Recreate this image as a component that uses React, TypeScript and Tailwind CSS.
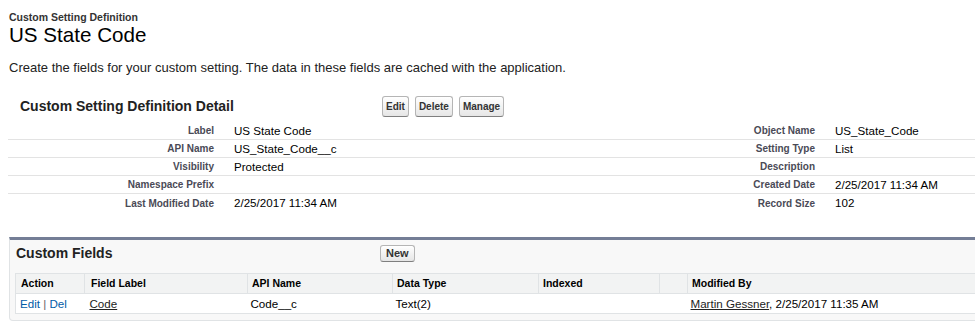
import React from "react";

const details: [string, string, string, string][] = [
  ["Label", "US State Code", "Object Name", "US_State_Code"],
  ["API Name", "US_State_Code__c", "Setting Type", "List"],
  ["Visibility", "Protected", "Description", ""],
  ["Namespace Prefix", "", "Created Date", "2/25/2017 11:34 AM"],
  ["Last Modified Date", "2/25/2017 11:34 AM", "Record Size", "102"],
];

const columns = [
  { name: "Action", w: "w-[69px]" },
  { name: "Field Label", w: "w-[163px]" },
  { name: "API Name", w: "w-[145px]" },
  { name: "Data Type", w: "w-[146px]" },
  { name: "Indexed", w: "w-[121px]" },
  { name: "", w: "w-[28px]" },
  { name: "Modified By", w: "w-auto" },
];

function Btn({ children }: { children: React.ReactNode }) {
  return (
    <button className="h-[21px] px-[3px] rounded-[3px] border border-[#b5b5b5] border-b-[#7f7f7f] bg-gradient-to-b from-white to-[#e6e6e6] text-[10px] font-bold text-[#333] leading-none">
      {children}
    </button>
  );
}

export default function App() {
  return (
    <div className="w-[975px] h-[335px] overflow-hidden bg-white text-black font-['Liberation_Sans',Arial,sans-serif]">
      <div className="pl-[9px] pt-[11px]">
        <div className="text-[10.5px] leading-[12px] font-bold text-[#333]">Custom Setting Definition</div>
        <h1 className="text-[20.6px] leading-[24px] text-black">US State Code</h1>
      </div>
      <p className="pl-[9px] mt-[14px] text-[13px] leading-[14px] text-[#222]">
        Create the fields for your custom setting. The data in these fields are cached with the application.
      </p>

      {/* detail block */}
      <div className="mt-[20px] ml-[8px]">
        <div className="flex items-center h-[23px]">
          <h2 className="w-[374px] pl-[12px] text-[14px] font-bold text-[#222]">Custom Setting Definition Detail</h2>
          <div className="flex gap-[6px]">
            <Btn>Edit</Btn>
            <Btn>Delete</Btn>
            <Btn>Manage</Btn>
          </div>
        </div>
        <div className="mt-[4px]">
          {details.map(([l1, v1, l2, v2], i) => (
            <div
              key={l1}
              className={`grid grid-cols-[216px_400px_201px_1fr] h-[18px] items-center ${
                i < details.length - 1 ? "border-b border-[#e3e3e3]" : ""
              }`}
            >
              <div className="text-right pr-[10px] text-[10px] font-bold text-[#4a4a56]">{l1}</div>
              <div className="pl-[10px] text-[11.6px] text-black">{v1}</div>
              <div className="text-right pr-[10px] text-[10px] font-bold text-[#4a4a56]">{l2}</div>
              <div className="pl-[10px] text-[11.6px] text-black">{v2}</div>
            </div>
          ))}
        </div>
      </div>

      {/* related list */}
      <div className="mt-[25px] ml-[9px] w-[990px] border-t-[3px] border-t-[#747e96] border-x border-b border-[#e0e3e5] rounded-b-[4px] bg-[#f8f8f8] pb-[6px]">
        <div className="flex items-center h-[26px]">
          <h3 className="w-[370px] pl-[6px] text-[14px] font-bold text-[#222]">Custom Fields</h3>
          <button className="h-[17px] px-[5px] rounded-[3px] border border-[#b5b5b5] border-b-[#7f7f7f] bg-gradient-to-b from-white to-[#e6e6e6] text-[11px] font-bold text-[#333] leading-none">
            New
          </button>
        </div>
        <table className="mt-[7px] ml-[5px] w-[980px] table-fixed border-collapse border border-[#e0e3e5]">
          <colgroup>
            {columns.map((c, i) => (
              <col key={i} className={c.w} />
            ))}
          </colgroup>
          <thead>
            <tr className="h-[20px] bg-[#f2f3f3]">
              {columns.map((c, i) => (
                <th
                  key={i}
                  className={`border-l border-[#e0e3e5] text-left ${
                    i === 0 ? "pl-[5px]" : i === 1 ? "pl-[6px]" : "pl-[4px]"
                  } text-[10.5px] font-bold text-black whitespace-nowrap`}
                >
                  {c.name}
                </th>
              ))}
            </tr>
          </thead>
          <tbody>
            <tr className="h-[20px] bg-white text-[11.6px] border-t border-[#e0e3e5]">
              <td className="pl-[4px] whitespace-nowrap">
                <span className="text-[#015ba7]">Edit</span>
                <span className="text-[#666]"> | </span>
                <span className="text-[#015ba7]">Del</span>
              </td>
              <td className="pl-[5px]">
                <span className="underline text-[#222]">Code</span>
              </td>
              <td className="pl-[3px]">Code__c</td>
              <td className="pl-[3px]">Text(2)</td>
              <td></td>
              <td></td>
              <td className="pl-[3px] whitespace-nowrap">
                <span className="underline text-[#222]">Martin Gessner</span>, 2/25/2017 11:35 AM
              </td>
            </tr>
          </tbody>
        </table>
      </div>
    </div>
  );
}
